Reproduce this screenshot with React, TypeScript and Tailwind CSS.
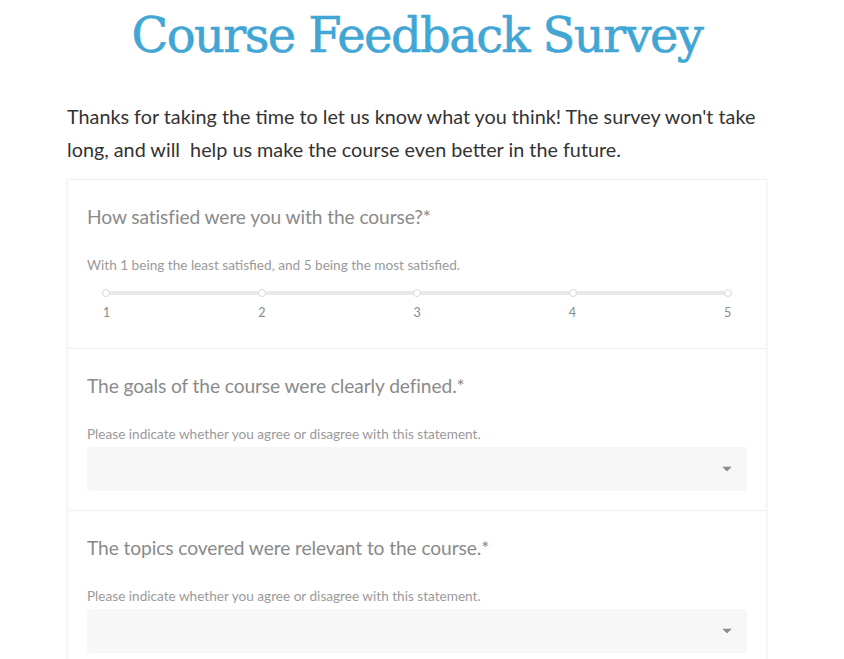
import { ChangeEvent, useState } from "react";

const agreeOptions = [
  "Strongly disagree",
  "Disagree",
  "Neutral",
  "Agree",
  "Strongly agree",
];

function Question({ title, hint, children, last = false }: { title: string; hint: string; children: React.ReactNode; last?: boolean }) {
  return (
    <div className={`px-[19px] pt-[25px] ${last ? "pb-5" : "pb-[19px] border-b border-[#efefef]"}`}>
      <h2 className="text-[19.2px] leading-6 text-[#8a8a8a] tracking-[-0.1px]">{title}</h2>
      <p className="mt-[27px] text-[13.6px] leading-[18px] text-[#9a9a9a]">{hint}</p>
      {children}
    </div>
  );
}

function RatingSlider() {
  const [value, setValue] = useState<number | null>(null);
  return (
    <div className="pl-[19px] pr-[19px] pt-[17px] pb-[8px]">
      <div className="relative h-[4px] bg-[#e9e9e9] rounded-full">
        {[1, 2, 3, 4, 5].map((n, i) => (
          <button
            key={n}
            onClick={() => setValue(n)}
            className={`absolute top-1/2 -translate-y-1/2 -translate-x-1/2 w-[8px] h-[8px] rounded-full border border-[#d8d8d8] ${value === n ? "bg-[#42a6d5]" : "bg-white"}`}
            style={{ left: `${i * 25}%` }}
            aria-label={`Rate ${n}`}
          />
        ))}
      </div>
      <div className="flex justify-between mt-[10px] -mx-[3px] text-[12.5px] leading-4 text-[#8a8a8a]">
        {[1, 2, 3, 4, 5].map((n) => (
          <span key={n} className="w-[7px] text-center">{n}</span>
        ))}
      </div>
    </div>
  );
}

function AgreeSelect() {
  const [value, setValue] = useState("");
  return (
    <div className="relative mt-[4px]">
      <select
        value={value}
        onChange={(e: ChangeEvent<HTMLSelectElement>) => setValue(e.target.value)}
        className="appearance-none w-full h-[44px] bg-[#f7f7f7] rounded-[3px] px-3 text-[15px] text-[#666] outline-none"
      >
        <option value=""></option>
        {agreeOptions.map((o) => (
          <option key={o} value={o}>{o}</option>
        ))}
      </select>
      <svg className="absolute right-[15px] top-1/2 -translate-y-1/2 pointer-events-none" width="10" height="5" viewBox="0 0 10 5">
        <path d="M0 0h10L5 5z" fill="#8c8c8c" />
      </svg>
    </div>
  );
}

export default function App() {
  return (
    <div className="min-h-screen bg-white font-['Lato','Open_Sans',sans-serif]">
      <div className="w-[700px] ml-[67px]">
        <h1 className="text-center pt-[4px] text-[48px] leading-[62px] text-[#42a6d5] font-['DejaVu_Serif','Liberation_Serif',serif] tracking-[-1.6px] [-webkit-text-stroke:0.6px_#42a6d5]">
          Course Feedback Survey
        </h1>
        <p className="mt-[34px] text-[19.8px] leading-[33px] text-[#333]">
          Thanks for taking the time to let us know what you think! The survey won't take long, and will&nbsp; help us make the course even better in the future.
        </p>
        <div className="mt-[13px] bg-white border border-[#f0f0f0] shadow-[0_1px_3px_rgba(0,0,0,0.06)]">
          <Question title="How satisfied were you with the course?*" hint="With 1 being the least satisfied, and 5 being the most satisfied.">
            <RatingSlider />
          </Question>
          <Question title="The goals of the course were clearly defined.*" hint="Please indicate whether you agree or disagree with this statement.">
            <AgreeSelect />
          </Question>
          <Question title="The topics covered were relevant to the course.*" hint="Please indicate whether you agree or disagree with this statement." last>
            <AgreeSelect />
          </Question>
        </div>
      </div>
    </div>
  );
}
